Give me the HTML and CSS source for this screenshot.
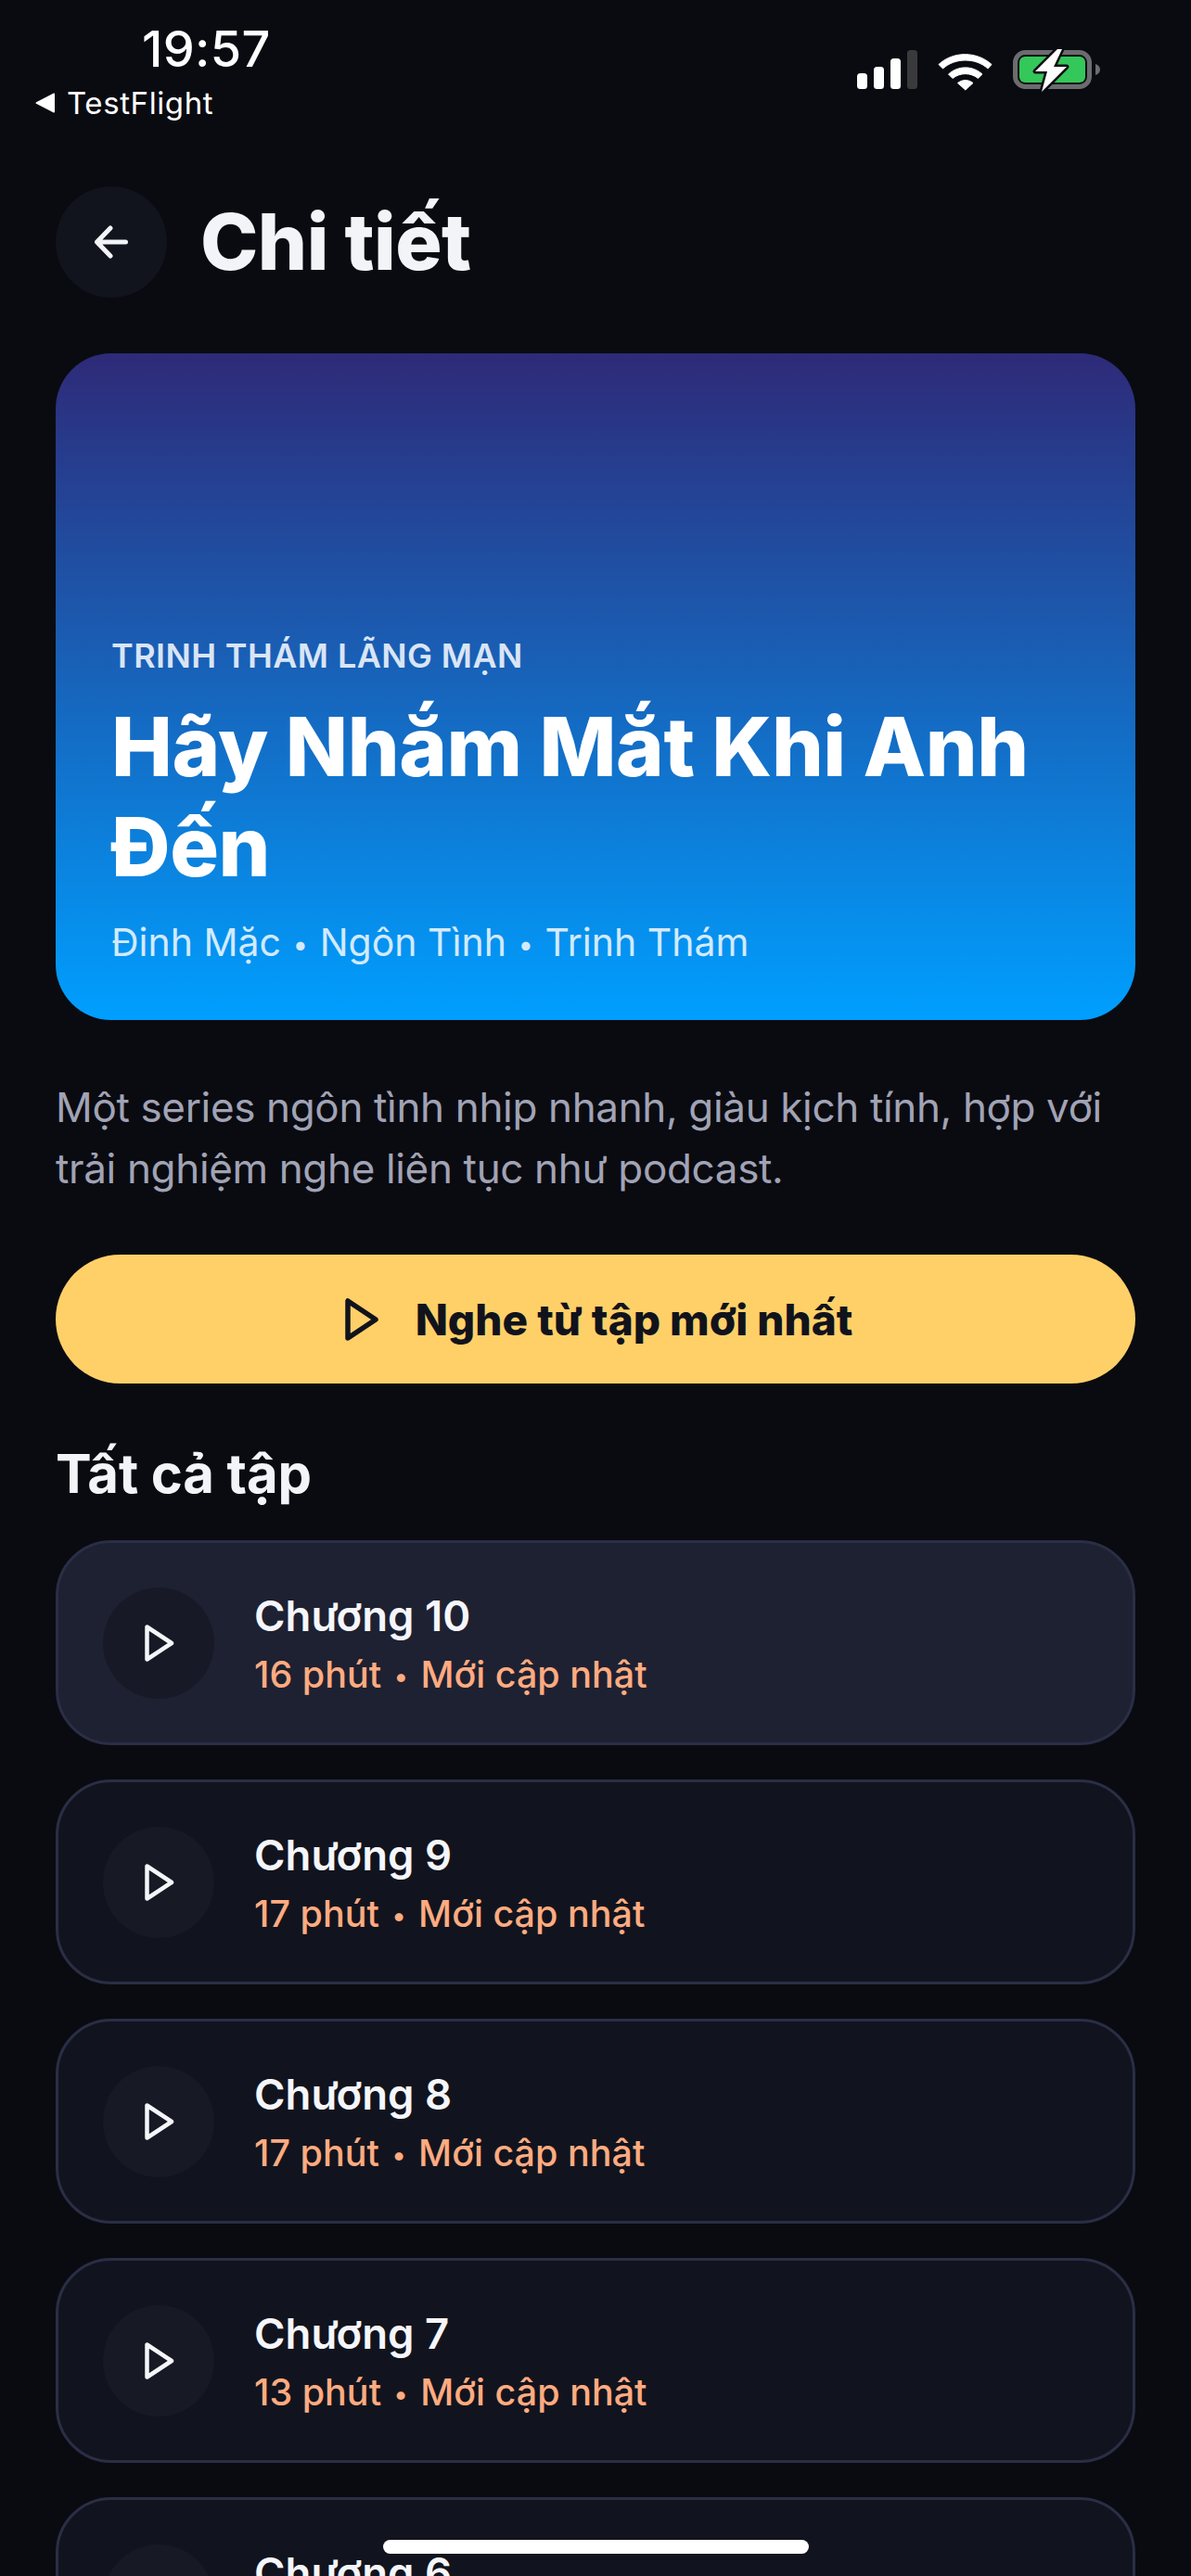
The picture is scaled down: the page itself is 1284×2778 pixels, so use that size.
FILE: index.html
```html
<!DOCTYPE html>
<html lang="vi">
<head>
<meta charset="utf-8">
<title>Chi tiết</title>
<link rel="stylesheet" href="styles.css">
</head>
<body>
<div class="screen">
  <header class="status">
    <div class="status-left">
      <div class="time">19:57</div>
      <div class="back-app">
        <svg class="back-tri" viewBox="0 0 22 22"><path d="M21 1.500v19a1 1 0 0 1-1.600.8L1 11.800a1 1 0 0 1 0-1.600L19.400 .7a1 1 0 0 1 1.600.8z" fill="#fff"/></svg>
        <span>TestFlight</span>
      </div>
    </div>
    <svg class="status-icons" viewBox="0 0 262 44">
      <rect x="0" y="25" width="11" height="17" rx="3.500" fill="#fff"/>
      <rect x="18" y="18" width="11" height="24" rx="3.500" fill="#fff"/>
      <rect x="36" y="9" width="11" height="33" rx="3.500" fill="#fff"/>
      <rect x="54" y="0" width="11" height="42" rx="3.500" fill="#3a3a3c"/>
      <path d="M88 15.500C103.500 1 129 1 145 15.500L141 20C128 8 105.500 8 92.500 20Z" fill="#fff" stroke="#fff" stroke-width="1" stroke-linejoin="round"/>
      <path d="M98.500 26C109 16.500 124.500 16.500 135 26L130.500 30.500C122.500 24 111 24 103 30.500Z" fill="#fff" stroke="#fff" stroke-width="1" stroke-linejoin="round"/>
      <path d="M108.500 35.500C114 31.500 119.500 31.500 125 35.500L116.800 43Z" fill="#fff" stroke="#fff" stroke-width="1" stroke-linejoin="round"/>
      <rect x="170.500" y="2.500" width="80" height="37" rx="11" fill="none" stroke="#6c6c70" stroke-width="5"/>
      <rect x="175" y="7" width="71" height="28" rx="6" fill="#34c759"/>
      <path d="M257 15c3 1 5 3 5 6s-2 5-5 6z" fill="#6c6c70"/>
      <path d="M216-1 192 23h13l-6 22 27-27h-14l9-19z" fill="#fff" stroke="#0a0b11" stroke-width="5" stroke-linejoin="round" paint-order="stroke"/>
    </svg>
  </header>

  <main class="content">
    <div class="topbar">
      <div class="back-btn">
        <svg class="back-icon" viewBox="0 0 36 36"><path d="M33.500 18H3M17 3 2.500 18 17 33" fill="none" stroke="#f3f4f8" stroke-width="5" stroke-linecap="round" stroke-linejoin="round"/></svg>
      </div>
      <h1 class="page-title">Chi tiết</h1>
    </div>

    <section class="hero">
      <div class="eyebrow">TRINH THÁM LÃNG MẠN</div>
      <h2 class="hero-title">Hãy Nhắm Mắt Khi Anh Đến</h2>
      <div class="byline">Đinh Mặc <span class="dot">•</span> Ngôn Tình <span class="dot">•</span> Trinh Thám</div>
    </section>

    <p class="desc">Một series ngôn tình nhịp nhanh, giàu kịch tính, hợp với trải nghiệm nghe liên tục như podcast.</p>

    <div class="cta">
      <svg class="cta-icon" viewBox="0 0 36 46"><path d="M3 3v40L33 23Z" fill="none" stroke="#11131c" stroke-width="5.500" stroke-linejoin="round"/></svg>
      <span>Nghe từ tập mới nhất</span>
    </div>

    <h3 class="section-title">Tất cả tập</h3>

    <div class="episodes">
      <article class="episode active">
        <div class="ep-play"><svg class="ep-icon" viewBox="0 0 32 40"><path d="M2.500 2.500v35L29 20Z" fill="none" stroke="#f5f6fa" stroke-width="4.500" stroke-linejoin="round"/></svg></div>
        <div class="ep-text"><div class="ep-name">Chương 10</div><div class="ep-meta">16 phút <span class="dot">•</span> Mới cập nhật</div></div>
      </article>
      <article class="episode">
        <div class="ep-play"><svg class="ep-icon" viewBox="0 0 32 40"><path d="M2.500 2.500v35L29 20Z" fill="none" stroke="#f5f6fa" stroke-width="4.500" stroke-linejoin="round"/></svg></div>
        <div class="ep-text"><div class="ep-name">Chương 9</div><div class="ep-meta">17 phút <span class="dot">•</span> Mới cập nhật</div></div>
      </article>
      <article class="episode">
        <div class="ep-play"><svg class="ep-icon" viewBox="0 0 32 40"><path d="M2.500 2.500v35L29 20Z" fill="none" stroke="#f5f6fa" stroke-width="4.500" stroke-linejoin="round"/></svg></div>
        <div class="ep-text"><div class="ep-name">Chương 8</div><div class="ep-meta">17 phút <span class="dot">•</span> Mới cập nhật</div></div>
      </article>
      <article class="episode">
        <div class="ep-play"><svg class="ep-icon" viewBox="0 0 32 40"><path d="M2.500 2.500v35L29 20Z" fill="none" stroke="#f5f6fa" stroke-width="4.500" stroke-linejoin="round"/></svg></div>
        <div class="ep-text"><div class="ep-name">Chương 7</div><div class="ep-meta">13 phút <span class="dot">•</span> Mới cập nhật</div></div>
      </article>
      <article class="episode">
        <div class="ep-play"><svg class="ep-icon" viewBox="0 0 32 40"><path d="M2.500 2.500v35L29 20Z" fill="none" stroke="#f5f6fa" stroke-width="4.500" stroke-linejoin="round"/></svg></div>
        <div class="ep-text"><div class="ep-name">Chương 6</div><div class="ep-meta">15 phút <span class="dot">•</span> Mới cập nhật</div></div>
      </article>
    </div>
  </main>

  <div class="home-indicator"></div>
</div>
</body>
</html>
```

FILE: styles.css
```css
* { box-sizing: border-box; margin: 0; padding: 0; }
html, body { width: 1284px; height: 2778px; overflow: hidden; background: #0a0b11; }
body { font-family: Inter, "Noto Sans", sans-serif; color: #f3f4f8; }
.screen { position: relative; width: 1284px; height: 2778px; overflow: hidden; background: #0a0b11; }

.status { height: 201px; display: flex; justify-content: space-between; align-items: flex-start; padding: 0 98px 0 38px; }
.status-left { display: flex; flex-direction: column; }
.time { font-size: 54px; font-weight: 500; line-height: 66px; margin: 20px 0 0 115px; color: #fff; letter-spacing: 0.3px; }
.back-app { display: flex; align-items: center; gap: 12px; font-size: 33px; font-weight: 400; line-height: 40px; margin-top: 5px; color: #fff; letter-spacing: 0.6px; }
.back-tri { width: 22px; height: 22px; }
.status-icons { width: 262px; height: 44px; margin-top: 54px; overflow: visible; }

.content { padding: 0 60px; }
.topbar { display: flex; align-items: center; gap: 36px; height: 120px; }
.back-btn { width: 120px; height: 120px; border-radius: 50%; background: #11141c; display: flex; align-items: center; justify-content: center; }
.back-icon { width: 36px; height: 36px; }
.page-title { font-size: 84px; font-weight: 800; line-height: 96px; color: #f3f4f8; letter-spacing: -0.6px; }

.hero { margin-top: 60px; height: 719px; border-radius: 60px; padding: 0 60px 56px; display: flex; flex-direction: column; justify-content: flex-end; background: linear-gradient(180deg, #2e2a78 0%, #009fff 100%); }
.eyebrow { font-size: 36px; font-weight: 600; line-height: 44px; letter-spacing: 0.4px; color: #d9e5f5; }
.hero-title { font-size: 88px; font-weight: 800; line-height: 108px; color: #fff; margin-top: 22px; letter-spacing: -0.45px; }
.byline { font-size: 41px; font-weight: 400; line-height: 52px; color: #d3eafd; margin-top: 23px; }
.byline .dot { margin: 0 1px; }
.dot { font-size: 0.72em; margin: 0 3px; vertical-align: 0.06em; }

.desc { margin-top: 61px; font-size: 44px; line-height: 66px; color: #a1a3b5; letter-spacing: -0.35px; }

.cta { margin-top: 60px; height: 139px; border-radius: 70px; background: #ffd068; display: flex; align-items: center; justify-content: center; gap: 40px; padding-left: 7px; font-size: 46px; font-weight: 800; color: #11131c; }
.cta-icon { width: 36px; height: 46px; }

.section-title { margin-top: 61px; font-size: 58px; font-weight: 700; line-height: 72px; color: #f3f4f8; letter-spacing: -0.1px; }

.episodes { margin-top: 36px; display: flex; flex-direction: column; gap: 37px; }
.episode { height: 221px; flex: none; border: 3px solid #2a2e45; border-radius: 60px; background: #11141e; padding: 0 48px; display: flex; align-items: center; gap: 43px; }
.episode.active { background: #1e2132; }
.ep-play { width: 120px; height: 120px; border-radius: 50%; background: #171924; display: flex; align-items: center; justify-content: center; flex: none; }
.active .ep-play { background: #171a26; }
.ep-icon { width: 32px; height: 40px; margin-left: 2px; }
.ep-text { padding-top: 5px; }
.ep-name { font-size: 45.5px; font-weight: 600; line-height: 58px; color: #f5f6fa; }
.ep-meta { font-size: 39.5px; font-weight: 500; line-height: 52px; color: #ffab80; margin-top: 8px; }

.home-indicator { position: absolute; left: 413px; top: 2739px; width: 459px; height: 15px; border-radius: 8px; background: #fff; }
```
